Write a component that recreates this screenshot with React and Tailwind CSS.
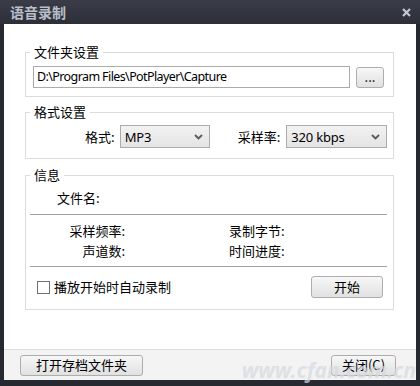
import React, { useState } from 'react'

const cjk = { fontFamily: '"Noto Sans CJK SC", "Noto Sans", sans-serif' }
const latin = { fontFamily: '"Noto Sans", "Noto Sans CJK SC", sans-serif' }

const Chevron = () => (
    <svg width="9" height="6" viewBox="0 0 9 6" className="shrink-0">
        <path d="M1 1 L4.5 4.5 L8 1" fill="none" stroke="#5a5a5a" strokeWidth="1.8" />
    </svg>
)

const Select = ({ value, className }) => (
    <div className={"h-[23px] flex items-center justify-between pl-[4px] pr-[6px] border border-[#acacac] bg-gradient-to-b from-[#f2f2f2] to-[#e4e4e4] " + className}>
        <span className="text-[13px] leading-[16px] text-black tracking-[-0.2px]" style={latin}>{value}</span>
        <Chevron />
    </div>
)

const Btn = ({ children, className }) => (
    <button className={"flex items-center justify-center border border-[#adadad] rounded-[3px] bg-gradient-to-b from-[#f7f7f7] to-[#e1e1e1] text-[13px] leading-[16px] text-black " + className} style={cjk}>
        {children}
    </button>
)

const App = () => {
    const [auto, setAuto] = useState(false)

    return (
        <div className="w-[420px] h-[386px] bg-[#262930] flex flex-col relative overflow-hidden" style={cjk}>

            {/* Title bar */}
            <div className="h-[24px] flex items-center justify-between pl-[10px] pr-[9px] bg-gradient-to-b from-[#3a3d48] to-[#2c2f38] shrink-0">
                <span className="text-[14px] leading-[16px] font-bold text-[#b9bec9]">语音录制</span>
                <svg width="9" height="9" viewBox="0 0 9 9">
                    <path d="M1 1 L8 8 M8 1 L1 8" stroke="#c3c7cf" strokeWidth="2.2" />
                </svg>
            </div>

            {/* Body */}
            <div className="mx-[4px] flex-1 bg-white flex flex-col">

                <div className="pt-[20px] pl-[21px] pr-[22px] flex flex-col">

                    {/* 文件夹设置 */}
                    <fieldset className="border border-[#dcdcdc] pb-[8px]">
                        <legend className="ml-[4px] px-[4px] text-[13px] leading-[16px] text-black">文件夹设置</legend>
                        <div className="flex items-center mt-[6px] gap-[6px] px-[7px]">
                            <div className="w-[317px] h-[22px] border border-[#ababab] flex items-center pl-[3px]">
                                <span className="text-[12.5px] leading-[16px] text-black tracking-[-0.6px]" style={latin}>D:\Program Files\PotPlayer\Capture</span>
                            </div>
                            <Btn className="w-[28px] h-[21px] text-[10px]">...</Btn>
                        </div>
                    </fieldset>

                    {/* 格式设置 */}
                    <fieldset className="mt-[7px] border border-[#dcdcdc] pb-[10px]">
                        <legend className="ml-[4px] px-[4px] text-[13px] leading-[16px] text-black">格式设置</legend>
                        <div className="flex items-center mt-[5px] pl-[59px]">
                            <span className="text-[13px] leading-[16px] text-black">格式:</span>
                            <Select value="MP3" className="ml-[5px] w-[90px]" />
                            <span className="ml-[28px] text-[13px] leading-[16px] text-black">采样率:</span>
                            <Select value="320 kbps" className="ml-[6px] w-[101px]" />
                        </div>
                    </fieldset>

                    {/* 信息 */}
                    <fieldset className="mt-[8px] border border-[#dcdcdc] pb-[11px]">
                        <legend className="ml-[4px] px-[4px] text-[13px] leading-[16px] text-black">信息</legend>
                        <div className="mt-[7px] pl-[31px] text-[13px] leading-[16px] text-black">文件名:</div>
                        <div className="mt-[8px] ml-[4px] mr-[6px] h-px bg-[#a0a0a0]"></div>

                        <div className="mt-[8px] flex flex-col gap-[4px] text-[13px] leading-[16px] text-black">
                            <div className="flex">
                                <span className="w-[99px] text-right whitespace-nowrap">采样频率:</span>
                                <span className="ml-[104px] whitespace-nowrap">录制字节:</span>
                            </div>
                            <div className="flex">
                                <span className="w-[99px] text-right whitespace-nowrap">声道数:</span>
                                <span className="ml-[104px] whitespace-nowrap">时间进度:</span>
                            </div>
                        </div>

                        <div className="mt-[7px] ml-[4px] mr-[6px] h-px bg-[#a0a0a0]"></div>

                        <div className="mt-[9px] flex items-center justify-between pl-[11px] pr-[10px]">
                            <label className="flex items-center gap-[4px] cursor-pointer" onClick={() => setAuto(!auto)}>
                                <span className="w-[13px] h-[13px] border border-[#707070] bg-white flex items-center justify-center">
                                    {auto && (
                                        <svg width="9" height="9" viewBox="0 0 9 9">
                                            <path d="M1 4.5 L3.5 7 L8 1.5" fill="none" stroke="#222" strokeWidth="1.5" />
                                        </svg>
                                    )}
                                </span>
                                <span className="text-[13px] leading-[16px] text-black">播放开始时自动录制</span>
                            </label>
                            <Btn className="w-[72px] h-[22px]">开始</Btn>
                        </div>
                    </fieldset>
                </div>

                {/* Footer */}
                <div className="mt-auto h-[31px] border-t border-[#dfdfdf] bg-[#f3f3f3] flex items-center justify-between pl-[16px] pr-[20px]">
                    <Btn className="w-[123px] h-[21px]">打开存档文件夹</Btn>
                    <Btn className="w-[65px] h-[21px]">关闭(C)</Btn>
                </div>
            </div>

            <div className="h-[6px] shrink-0"></div>

            {/* watermark */}
            <span className="absolute right-[4px] bottom-[4px] text-[21px] leading-[24px] italic font-bold text-[#d5d9e0] opacity-70 pointer-events-none" style={latin}>www.cfan.com.cn</span>
        </div>
    )
}

export default App
